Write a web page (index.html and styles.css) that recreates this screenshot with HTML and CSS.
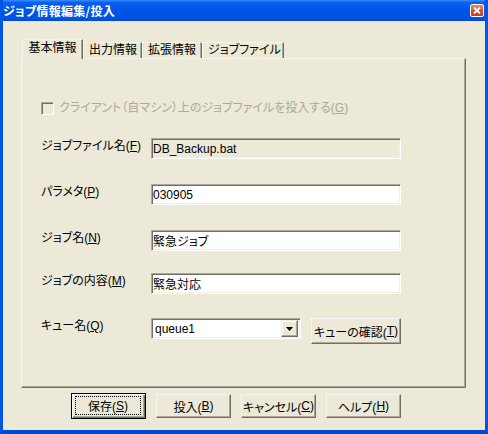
FILE: index.html
```html
<!DOCTYPE html>
<html lang="ja">
<head>
    <meta charset="UTF-8">
    <title>ジョブ情報編集/投入</title>
    <link rel="stylesheet" href="styles.css">
</head>
<body>
    <div class="window">
        <div class="titlebar">
            <span class="title">ジョブ情報編集/投入</span>
            <span class="close-btn">
                <svg width="8" height="7" viewBox="0 0 8 7"><path d="M1 0.5 L7 6.5 M7 0.5 L1 6.5" stroke="#fff" stroke-width="1.8" fill="none"/></svg>
            </span>
        </div>
        <div class="client">
            <div class="tabs">
                <div class="tab tab-active">基本情報</div>
                <div class="tab tab-2">出力情報</div>
                <div class="tab tab-3">拡張情報</div>
                <div class="tab tab-4">ジョブファイル</div>
            </div>
            <div class="panel">
                <div class="check-row">
                    <span class="checkbox"></span>
                    <span class="check-label">クライアント（自マシン）上のジョブファイルを投入する(<u>G</u>)</span>
                </div>
                <div class="field-row row-1">
                    <label class="field-label" for="jobFile">ジョブファイル名(<u>F</u>)</label>
                    <input class="textbox textbox-readonly" id="jobFile" type="text" value="DB_Backup.bat" readonly>
                </div>
                <div class="field-row row-2">
                    <label class="field-label" for="params">パラメタ(<u>P</u>)</label>
                    <input class="textbox" id="params" type="text" value="030905">
                </div>
                <div class="field-row row-3">
                    <label class="field-label" for="jobName">ジョブ名(<u>N</u>)</label>
                    <input class="textbox" id="jobName" type="text" value="緊急ジョブ">
                </div>
                <div class="field-row row-4">
                    <label class="field-label" for="jobDesc">ジョブの内容(<u>M</u>)</label>
                    <input class="textbox" id="jobDesc" type="text" value="緊急対応">
                </div>
                <div class="field-row row-5">
                    <label class="field-label">キュー名(<u>Q</u>)</label>
                    <div class="combo">
                        <span class="combo-text">queue1</span>
                        <span class="combo-arrow">
                            <svg width="7" height="4" viewBox="0 0 7 4"><path d="M0 0 H7 L3.5 4 Z" fill="#000"/></svg>
                        </span>
                    </div>
                    <button class="btn btn-queue" type="button">キューの確認(<u>T</u>)</button>
                </div>
            </div>
            <div class="button-row">
                <button class="btn btn-default" type="button"><span class="focus-ring">保存(<u>S</u>)</span></button>
                <button class="btn" type="button">投入(<u>B</u>)</button>
                <button class="btn" type="button">キャンセル(<u>C</u>)</button>
                <button class="btn" type="button">ヘルプ(<u>H</u>)</button>
            </div>
        </div>
    </div>
</body>
</html>
```

FILE: styles.css
```css
* {
    box-sizing: border-box;
}
html, body {
    margin: 0;
    padding: 0;
    width: 488px;
    height: 434px;
    overflow: hidden;
    font-family: "Liberation Sans", "Noto Sans CJK JP", sans-serif;
    font-size: 12px;
    font-feature-settings: "palt";
    color: #000;
}
u {
    text-decoration: underline;
    text-underline-offset: 1px;
}

/* window frame */
.window {
    width: 488px;
    height: 434px;
    display: flex;
    flex-direction: column;
    border-left: 3px solid #0055e5;
    border-right: 3px solid #0055e5;
    border-bottom: 4px solid #0047d4;
    background: #0055e5;
}
.titlebar {
    height: 21px;
    flex-shrink: 0;
    display: flex;
    align-items: center;
    justify-content: space-between;
    padding-right: 1px;
    background: linear-gradient(to bottom, #3d8ff8 0%, #0a5ef0 12%, #0055e5 50%, #0052e0 90%, #0046d2 100%);
}
.title {
    color: #fff;
    font-weight: bold;
    font-family: "Noto Sans CJK JP", sans-serif;
    font-size: 12px;
    line-height: 14px;
    letter-spacing: 0.3px;
}
.close-btn {
    width: 14px;
    height: 13px;
    display: flex;
    align-items: center;
    justify-content: center;
    border: 1px solid #fff;
    border-radius: 2px;
    background: linear-gradient(to bottom, #e8876b, #d8492a 60%, #c73c1c);
}

.client {
    flex: 1;
    background: #ece9d8;
    padding: 18px 19px 0 18px;
    display: flex;
    flex-direction: column;
}

/* tabs */
.tabs {
    height: 19px;
    display: flex;
    align-items: flex-end;
    padding-left: 1px;
}
.tab {
    height: 16px;
    line-height: 14px;
    padding: 0 5px;
    border-top: 1px dotted #fff;
    border-left: 1px dotted #fff;
    border-right: 1px solid #716f64;
    box-shadow: inset -1px 0 #aca899;
    white-space: nowrap;
}
.tab-active {
    width: 61px;
    height: 20px;
    line-height: 17px;
    margin-bottom: -1px;
    position: relative;
    z-index: 1;
    background: #ece9d8;
    text-align: center;
}
.tab-2 { width: 59px; }
.tab-3 { width: 60px; }
.tab-4 { width: 82px; }

.panel {
    width: 445px;
    height: 330px;
    border-top: 1px dotted #fff;
    border-left: 1px dotted #fff;
    border-right: 1px solid #716f64;
    border-bottom: 1px solid #716f64;
    box-shadow: inset -1px -1px #aca899;
    padding: 43px 0 0 19px;
}
.check-row {
    height: 13px;
    display: flex;
    align-items: center;
}
.checkbox {
    width: 13px;
    height: 13px;
    border: 1px solid;
    border-color: #aca899 #fff #fff #aca899;
    box-shadow: inset 1px 1px #716f64;
    background: #ece9d8;
    margin-right: 5px;
}
.check-label {
    color: #aca899;
    line-height: 13px;
    white-space: nowrap;
}

.field-row {
    display: flex;
    align-items: flex-start;
    height: 21px;
}
.row-1 { margin-top: 23px; }
.row-2 { margin-top: 25px; }
.row-3 { margin-top: 25px; }
.row-4 { margin-top: 22px; }
.row-5 { margin-top: 24px; height: 26px; }

.field-label {
    width: 110px;
    line-height: 17px;
    white-space: nowrap;
}
.textbox {
    width: 250px;
    height: 21px;
    margin: 0;
    padding: 0 2px 0 1px;
    font: inherit;
    font-size: 12px;
    color: #000;
    background: #fff;
    border: 1px solid;
    border-color: #aca899 #fff #fff #aca899;
    box-shadow: inset 1px 1px #716f64, inset -1px -1px #f1efe2;
    outline: none;
}
.textbox-readonly {
    background: #ece9d8;
}

.combo {
    width: 150px;
    height: 21px;
    display: flex;
    align-items: center;
    justify-content: space-between;
    background: #fff;
    border: 1px solid;
    border-color: #aca899 #fff #fff #aca899;
    box-shadow: inset 1px 1px #716f64, inset -1px -1px #f1efe2;
    padding: 2px 2px 2px 3px;
}
.combo-arrow {
    width: 17px;
    height: 17px;
    display: flex;
    align-items: center;
    justify-content: center;
    background: #ece9d8;
    border: 1px solid;
    border-color: #f1efe2 #716f64 #716f64 #f1efe2;
    box-shadow: inset -1px -1px #aca899, inset 1px 1px #fff;
}

/* buttons */
.btn {
    width: 75px;
    height: 24px;
    margin: 0;
    padding: 0;
    font: inherit;
    font-size: 12px;
    color: #000;
    background: #ece9d8;
    border: 1px solid;
    border-style: dotted solid solid dotted;
    border-color: #fff #716f64 #716f64 #fff;
    box-shadow: inset -1px -1px #aca899;
    white-space: nowrap;
    display: flex;
    align-items: center;
    justify-content: center;
}
.btn-queue {
    width: 90px;
    height: 26px;
    margin-left: 10px;
}
.button-row {
    margin-top: 5px;
    height: 26px;
    display: flex;
    align-items: center;
    gap: 10px;
    padding-left: 50px;
}
.btn-default {
    height: 26px;
    border: 1px solid #000;
    box-shadow: inset 1px 1px #fff, inset -1px -1px #716f64, inset -2px -2px #aca899;
    padding: 2px 4px 3px 3px;
}
.focus-ring {
    flex: 1;
    height: 100%;
    border: 1px dotted #000;
    display: flex;
    align-items: center;
    justify-content: center;
}
```
